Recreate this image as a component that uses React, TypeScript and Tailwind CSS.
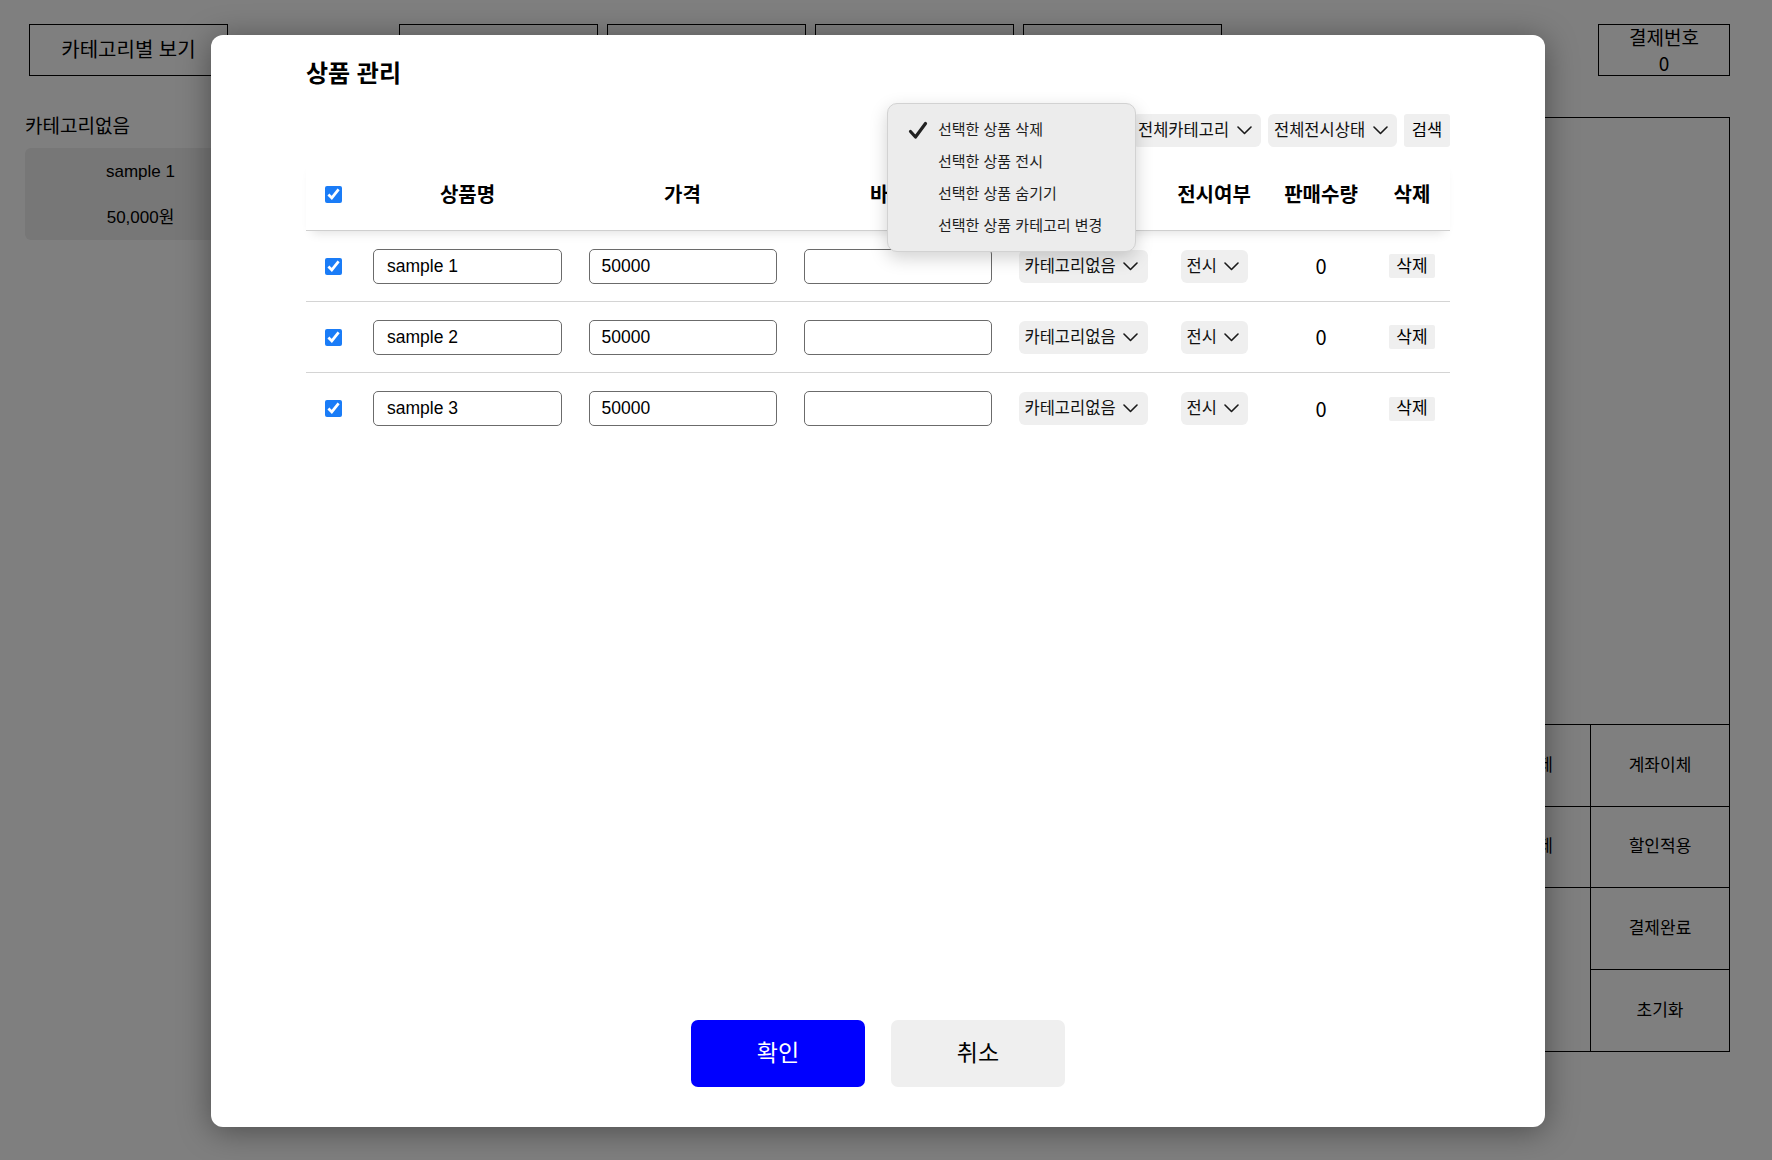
import React from 'react';

const products = [
  { id: 1, name: 'sample 1', price: '50000' },
  { id: 2, name: 'sample 2', price: '50000' },
  { id: 3, name: 'sample 3', price: '50000' },
];

const bulkActions = ['선택한 상품 삭제', '선택한 상품 전시', '선택한 상품 숨기기', '선택한 상품 카테고리 변경'];

const cols = 'grid grid-cols-[54px_215px_215px_215px_156px_106px_108px_74px] items-center';

const Chevron = () => (
  <svg width="15" height="9" viewBox="0 0 15 9" fill="none" className="shrink-0">
    <polyline points="1,1 7.5,7.5 14,1" stroke="#1a1a1a" strokeWidth="1.6" strokeLinecap="round" strokeLinejoin="round" />
  </svg>
);

const SelectBox = ({ label, className = '' }: { label: string; className?: string }) => (
  <div
    className={`flex items-center justify-between h-[33px] pl-[6px] pr-[9px] rounded-[6px] bg-[#efefef] text-[16.5px] leading-none text-[#111] ${className}`}
  >
    <span>{label}</span>
    <Chevron />
  </div>
);

const Check = ({ className = '' }: { className?: string }) => (
  <input type="checkbox" checked readOnly className={`w-[17px] h-[17px] accent-[#1a7cf7] ${className}`} />
);

// background page, dimmed by the overlay
const BackgroundPage = () => (
  <div className="flex pt-[24px] text-black">
    <div className="ml-[25px] w-[231px] flex flex-col">
      <div className="ml-[4px] w-[199px] h-[52px] border border-black flex items-center justify-center text-[20px]">
        카테고리별 보기
      </div>
      <div className="mt-[37px] text-[19px] leading-[28px]">카테고리없음</div>
      <div className="mt-[7px] h-[92px] rounded-[6px] bg-[#eeeeee] flex flex-col items-center text-[17px]">
        <div className="mt-[12px] leading-[24px]">sample 1</div>
        <div className="mt-[22px] leading-[24px]">50,000원</div>
      </div>
    </div>

    <div className="ml-[143px] flex gap-[9px]">
      {[0, 1, 2, 3].map((i) => (
        <div key={i} className="w-[199px] h-[52px] border border-black" />
      ))}
    </div>

    <div className="ml-[230px] w-[278px] flex flex-col items-end">
      <div className="w-[132px] h-[52px] border border-black flex flex-col items-center justify-center text-[19px] font-['Noto_Sans_CJK_KR',sans-serif]">
        <div className="leading-[26px]">결제번호</div>
        <div className="leading-[26px]">0</div>
      </div>
      <div className="mt-[41px] w-[278px] border border-black flex flex-col">
        <div className="h-[607px] border-b border-black" />
        <div className="grid grid-cols-2 text-[17px]">
          <div className="h-[82px] border-r border-b border-black flex items-center justify-center">현금결제</div>
          <div className="h-[82px] border-b border-black flex items-center justify-center">계좌이체</div>
          <div className="h-[81px] border-r border-b border-black flex items-center justify-center">카드결제</div>
          <div className="h-[81px] border-b border-black flex items-center justify-center">할인적용</div>
          <div className="row-span-2 border-r border-black" />
          <div className="h-[82px] border-b border-black flex items-center justify-center">결제완료</div>
          <div className="h-[81px] flex items-center justify-center">초기화</div>
        </div>
      </div>
    </div>
  </div>
);

export default function App() {
  return (
    <div className="relative w-full h-[1160px] overflow-hidden bg-white font-['Liberation_Sans','Noto_Sans_CJK_KR',sans-serif]">
      <BackgroundPage />

      <div className="absolute inset-0 bg-black/50" />

      {/* 상품 관리 modal */}
      <div className="absolute left-[211px] top-[35px] w-[1334px] h-[1092px] rounded-[12px] bg-white shadow-[0_4px_32px_rgba(0,0,0,0.4)] flex flex-col px-[95px] pt-[22px] text-black">
        <h2 className="h-[33px] text-[24px] leading-[33px] font-bold">상품 관리</h2>

        {/* filters (bulk action select sits under the open popup) */}
        <div className="mt-[24px] flex justify-end gap-[7px]">
          <SelectBox label="전체카테고리" className="w-[129px]" />
          <SelectBox label="전체전시상태" className="w-[129px]" />
          <button className="h-[33px] w-[46px] rounded-[3px] bg-[#efefef] text-[16.5px] leading-none">검색</button>
        </div>

        {/* table header */}
        <div
          className={`${cols} mt-[11px] h-[73px] border-b border-[#cfcfcf] shadow-[0_8px_10px_-6px_rgba(0,0,0,0.12)] relative z-10 text-[20px] font-bold font-['Noto_Sans_CJK_KR',sans-serif]`}
        >
          <div className="flex justify-center">
            <Check />
          </div>
          <div className="text-center">상품명</div>
          <div className="text-center">가격</div>
          <div className="text-center">바코드</div>
          <div className="text-center">카테고리</div>
          <div className="text-center">전시여부</div>
          <div className="text-center">판매수량</div>
          <div className="text-center">삭제</div>
        </div>

        {/* rows */}
        {products.map((p, i) => (
          <div
            key={p.id}
            className={`${cols} h-[71px] ${i < products.length - 1 ? 'border-b border-[#d4d4d4]' : ''}`}
          >
            <div className="flex justify-center">
              <Check />
            </div>
            <div className="flex justify-center">
              <input
                value={p.name}
                readOnly
                className="w-[189px] h-[35px] border border-[#6b6b6b] rounded-[5px] px-[13px] text-[17.5px] outline-none"
              />
            </div>
            <div className="flex justify-center">
              <input
                value={p.price}
                readOnly
                className="w-[188px] h-[35px] border border-[#6b6b6b] rounded-[5px] px-[12px] text-[17.5px] outline-none"
              />
            </div>
            <div className="flex justify-center">
              <input
                value=""
                readOnly
                className="w-[188px] h-[35px] border border-[#6b6b6b] rounded-[5px] px-[12px] text-[17.5px] outline-none"
              />
            </div>
            <div className="flex justify-center">
              <SelectBox label="카테고리없음" className="w-[129px] pr-[10px]" />
            </div>
            <div className="flex justify-center">
              <SelectBox label="전시" className="w-[67px] pr-[8px]" />
            </div>
            <div className="text-center text-[20px] leading-[28px] font-['Noto_Sans_CJK_KR',sans-serif]">0</div>
            <div className="flex justify-center">
              <button className="h-[24px] w-[46px] rounded-[2px] bg-[#efefef] text-[17px] leading-none">삭제</button>
            </div>
          </div>
        ))}

        {/* footer buttons */}
        <div className="mt-auto mb-[40px] flex justify-center gap-[26px]">
          <button className="w-[174px] h-[67px] rounded-[7px] bg-[#0000ff] text-white text-[23px]">확인</button>
          <button className="w-[174px] h-[67px] rounded-[7px] bg-[#efefef] text-black text-[23px]">취소</button>
        </div>

        {/* open bulk action select popup */}
        <div className="absolute left-[676px] top-[68px] w-[249px] h-[149px] rounded-[10px] bg-[#ececec] border border-[#d2d2d2] shadow-[0_6px_18px_rgba(0,0,0,0.18)] pt-[10px] z-20">
          {bulkActions.map((a, i) => (
            <div key={a} className="flex items-center h-[32px] text-[15px] text-[#1e1e1e]">
              <div className="w-[50px] pl-[20px] flex items-center">
                {i === 0 && (
                  <svg width="20" height="19" viewBox="0 0 20 19" fill="none">
                    <path d="M2.5 10.5 L7.5 16 L17.5 2.5" stroke="#222" strokeWidth="3.2" strokeLinecap="round" strokeLinejoin="round" />
                  </svg>
                )}
              </div>
              <span>{a}</span>
            </div>
          ))}
        </div>
      </div>
    </div>
  );
}
